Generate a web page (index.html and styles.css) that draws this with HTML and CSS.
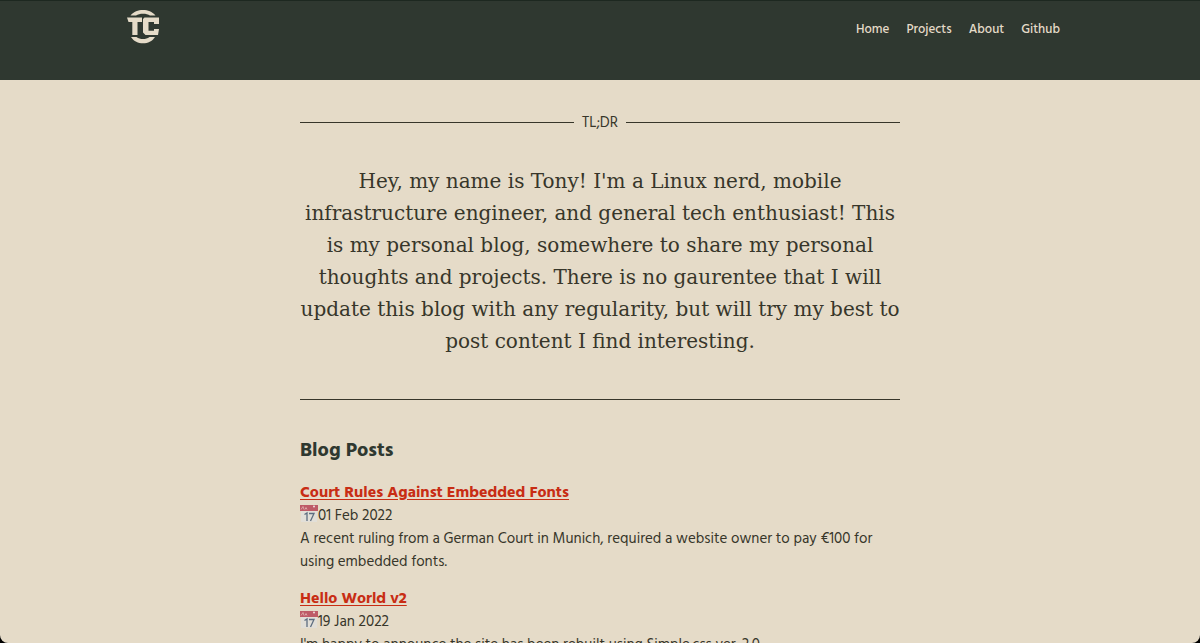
FILE: index.html
```html
<!DOCTYPE html>
<html lang="en">
<head>
<meta charset="utf-8">
<meta name="viewport" content="width=device-width, initial-scale=1">
<title>Blog</title>
<link rel="stylesheet" href="styles.css">
</head>
<body>
<svg class="sprite" aria-hidden="true">
  <symbol id="calendar" viewBox="0 0 18 18">
    <rect x="1" y="2" width="16" height="15" fill="#e2dfd8"/>
    <rect x="0" y="0" width="18" height="6" fill="#be5b67"/>
    <path d="M1 4.500l2-3 1 3M5 4.500l1-2 1 2" stroke="#dca5a5" fill="none"/>
    <circle cx="14" cy="1.500" r="1" fill="#f0dede"/>
    <path d="M4.500 9.500l2.500-1.500v8M9 8.500h5l-3.500 7.500" stroke="#5d6d80" stroke-width="1.300" fill="none"/>
  </symbol>
</svg>
<div class="window">
  <header class="site-header">
    <div class="bar">
      <a class="logo" href="#" aria-label="Home page">
        <svg viewBox="0 0 34 34" width="34" height="34" fill="#e5dbc8" aria-hidden="true">
          <path d="M4.500 5.500C8 1.500 12 0 17 0S26 1.500 29.500 5.500H24C22 4.300 20 3.800 17 3.800S12 4.300 10 5.500Z"/>
          <path d="M5 27H10.500C12.500 28.500 14.500 29 17 29S21.500 28.500 23.500 27H29C26 31.500 22 33.300 17 33.300S8 31.500 5 27Z"/>
          <path d="M1 7.500H16V12H11.500V25H6.300V12H2.500Z"/>
          <path d="M18.500 7.500H33V14H28V12H22.500V20.800H28V19H33L32 25H19.500L17 22.500V9Z"/>
        </svg>
      </a>
      <nav class="nav">
        <a href="#">Home</a>
        <a href="#">Projects</a>
        <a href="#">About</a>
        <a href="#">Github</a>
      </nav>
    </div>
  </header>
  <main class="content">
    <section class="intro">
      <h2 class="divider">TL;DR</h2>
      <p class="lead">Hey, my name is Tony! I'm a Linux nerd, mobile<br> infrastructure engineer, and general tech enthusiast! This<br> is my personal blog, somewhere to share my personal<br> thoughts and projects. There is no gaurentee that I will<br> update this blog with any regularity, but will try my best to<br> post content I find interesting.</p>
    </section>
    <section class="posts">
      <h1 class="heading">Blog Posts</h1>
      <article class="post">
        <a class="title" href="#">Court Rules Against Embedded Fonts</a>
        <div class="date"><svg class="icon" aria-hidden="true"><use href="#calendar"/></svg><time datetime="2022-02-01">01 Feb 2022</time></div>
        <p>A recent ruling from a German Court in Munich, required a website owner to pay €100 for using embedded fonts.</p>
      </article>
      <article class="post">
        <a class="title" href="#">Hello World v2</a>
        <div class="date"><svg class="icon" aria-hidden="true"><use href="#calendar"/></svg><time datetime="2022-01-19">19 Jan 2022</time></div>
        <p>I'm happy to announce the site has been rebuilt using Simple.css ver. 2.0</p>
      </article>
    </section>
  </main>
</div>
</body>
</html>
```
FILE: styles.css
```css
* { box-sizing: border-box; }
body {
  margin: 0;
  background: #000;
  color: #37362a;
  font: 15px/23px "Hind Madurai", "Noto Sans", sans-serif;
}
.sprite { position: absolute; width: 0; height: 0; }
.window {
  height: 100vh;
  overflow: hidden;
  background: #e5dbc8;
  border-radius: 0 0 8px 8px;
}
.site-header {
  height: 80px;
  padding: 9px 24px 0;
  background: #2f3830;
  border-top: 1px solid #1d2820;
}
.bar {
  display: flex;
  justify-content: space-between;
  align-items: flex-start;
  max-width: 934px;
  margin: 0 auto;
  padding-right: 7px;
}
.logo { display: flex; margin-left: -7px; }
.nav { display: flex; gap: 17px; padding-top: 8px; }
.nav a {
  color: #e5dbc8;
  font-size: 13px;
  font-weight: 500;
  text-decoration: none;
}
.content { max-width: 600px; margin: 0 auto; padding-top: 31px; }
.intro { padding-bottom: 42px; border-bottom: 1px solid #37362a; }
.divider {
  display: flex;
  align-items: center;
  gap: 8px;
  margin: 0;
  font-size: 15px;
  font-weight: 400;
}
.divider::before, .divider::after {
  content: "";
  flex: 1;
  border-top: 1px solid #37362a;
}
.lead {
  margin: 31px 0 0;
  font: 20px/32px "Roboto Slab", "DejaVu Serif", serif;
  text-align: center;
  white-space: nowrap;
}
.heading { margin: 36px 0 17px; font-size: 20px; line-height: 28px; color: #2f3830; }
.post { margin-bottom: 14px; }
.post p { margin: 0; }
.title { color: #c82d14; font-size: 16px; font-weight: 700; text-underline-offset: 2px; }
.date { display: flex; align-items: center; }
.icon { width: 18px; height: 18px; margin-top: -3px; }
```
